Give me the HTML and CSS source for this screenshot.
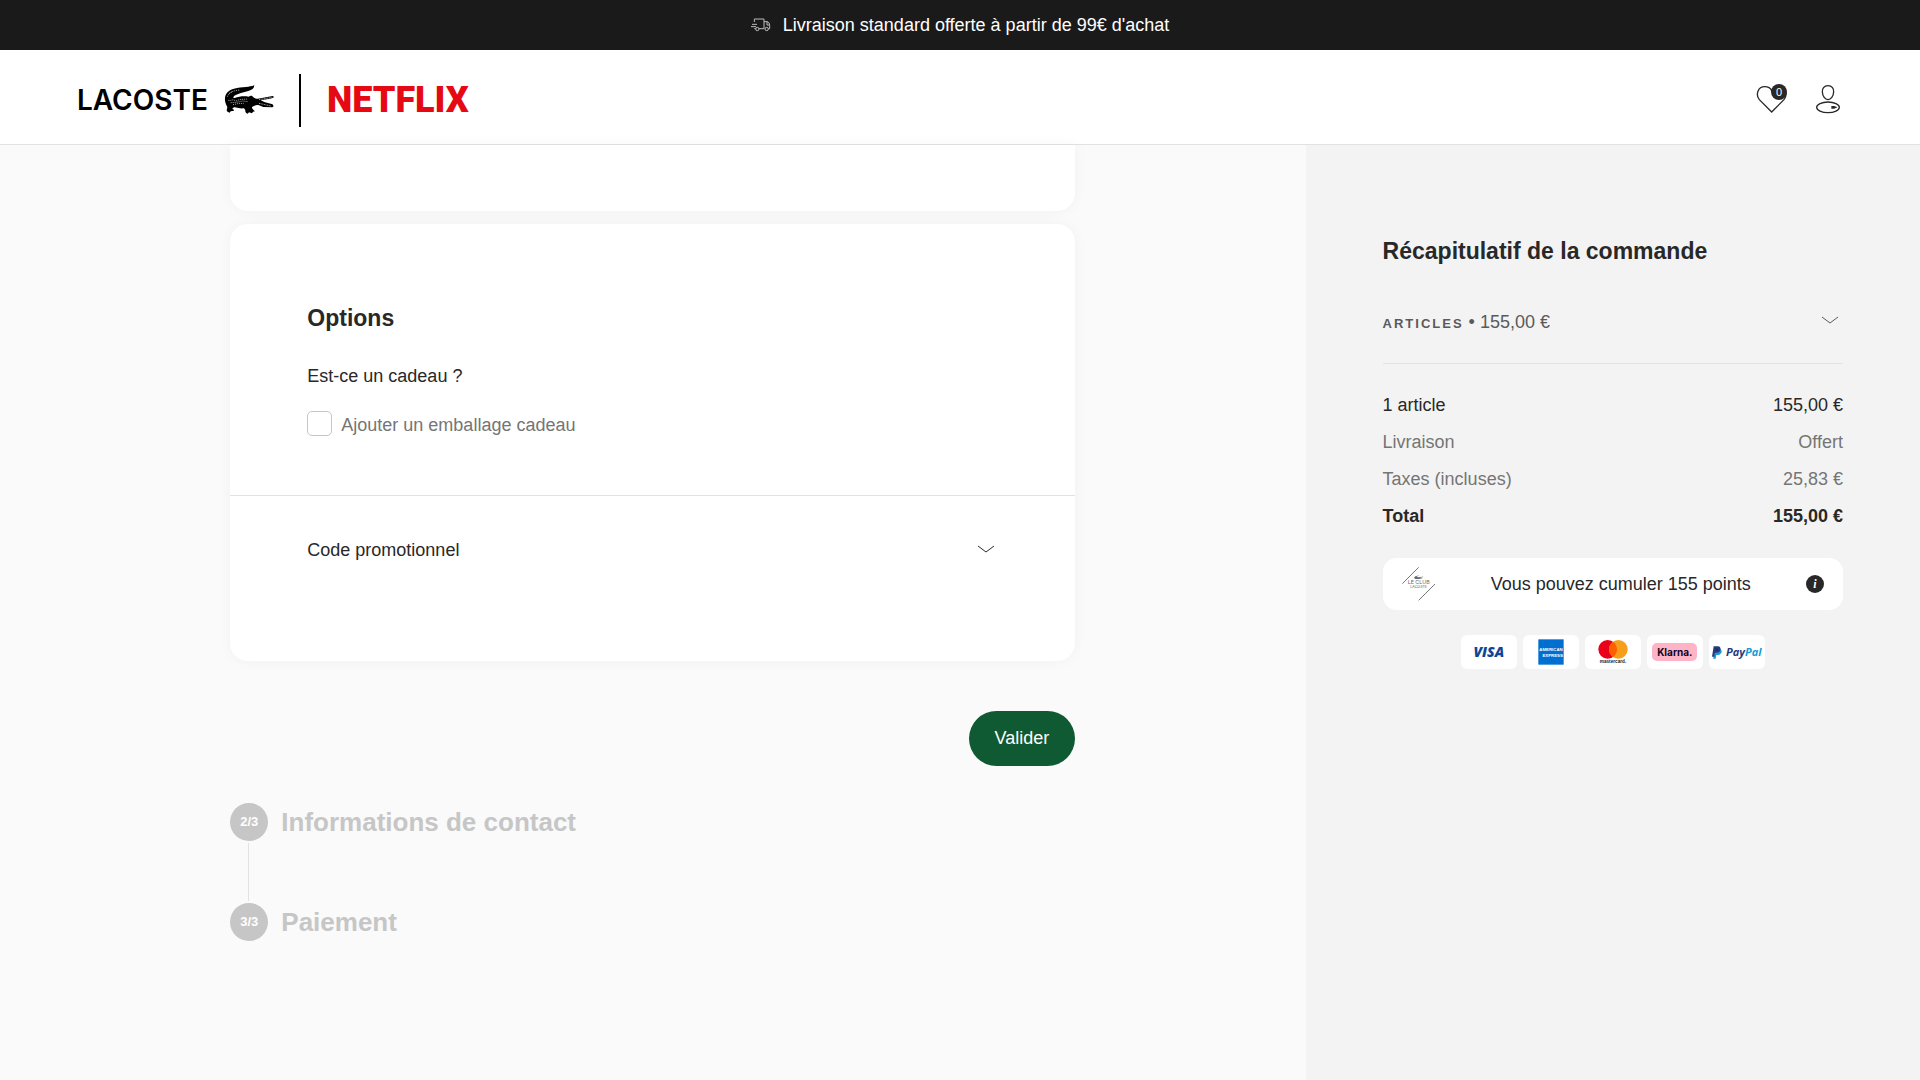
FILE: index.html
```html
<!DOCTYPE html>
<html lang="fr">
<head>
<meta charset="utf-8">
<meta name="viewport" content="width=device-width, initial-scale=1">
<title>Lacoste - Panier</title>
<link rel="stylesheet" href="styles.css">
</head>
<body>
<div class="promo">
  <svg class="promo-icon" width="20" height="14" viewBox="0 0 60 42" fill="none" stroke="#bdbdbd" stroke-width="3" aria-hidden="true">
    <path d="M10 12V3h29v29H24M39 11h9c5 0 8 6 8 12v9h-4M14 32h-4M3 19h15M0 26h15M48 11v10h8"/>
    <circle cx="19" cy="33" r="5"/><circle cx="47" cy="33" r="5"/>
  </svg>
  <p>Livraison standard offerte à partir de 99€ d'achat</p>
</div>

<header class="header">
  <a class="brand" href="#">
    <span class="brand-lacoste">LACOSTE</span>
    <svg class="brand-croc" width="50" height="30" viewBox="0 0 150 90" aria-hidden="true">
      <path fill="#000" d="M91 1c-1 10-7 14-18 17c-14 5-31 7-42 14c-4 4-4 8 1 7c14-5 28-7 42-4c5-4 11-4 13 1c5 4 9 5 14 5l45-8c3 0 4 3 2 5l-10 3l-28 5l13 6l20 5c6 2 7 8 2 10l-27-1l-15-6c-8 0-13 3-19 6c-1 6 6 8 9 13l-6 1l-3 5l-9-3l-4 4c-6-2-8-7-7-11l-4-5c-9 1-18 0-27-3c-4 0-7 2-8 5c3 1 5 2 5 5l-10 2l-3 4c-5-1-8-3-9-7l2-10C5 56 2 49 3 39c1-15 12-24 27-28c13-4 23-3 36-5c10-1 16-2 25-5z"/>
      <path fill="none" stroke="#fff" stroke-width="2" stroke-dasharray="3 3" d="M13 46c8 2 12-4 18 0s9 0 14-2l24-2M20 53l18-1l18-4l16 2M10 35c4-9 9-12 16-15M27 59l14-3l18-1M15 26c9-8 18-9 31-11"/>
      <path fill="none" stroke="#fff" stroke-width="2" stroke-dasharray="3 2" d="M105 44l40-7M105 55l36 8"/>
    </svg>
    <span class="brand-line"></span>
    <span class="brand-netflix">NETFLIX</span>
  </a>
  <nav class="tools" aria-label="Compte">
    <a class="tool" href="#" aria-label="Favoris">
      <svg width="32" height="32" viewBox="0 0 96 96" fill="none" stroke="#282828" stroke-width="4" aria-hidden="true">
        <path d="M47 90 10 53C-2 38 6 14 26 14c10 0 18 5 21 12c4-8 12-12 21-12c20 0 28 24 16 39z"/>
      </svg>
      <span class="badge">0</span>
    </a>
    <a class="tool" href="#" aria-label="Mon compte">
      <svg width="24" height="32" viewBox="0 0 72 96" fill="none" stroke="#282828" stroke-width="4" aria-hidden="true">
        <path d="M36 11c12 0 18 9 17 19c-1 13-8 23-17 23s-16-10-17-23c-1-10 5-19 17-19z"/>
        <ellipse cx="36" cy="76" rx="34" ry="16"/>
        <path d="M48 74h6l5 2l-5 2h-6z" fill="#282828"/>
      </svg>
    </a>
  </nav>
</header>

<div class="layout">
  <main class="checkout">
    <div class="column">
      <section class="card card-previous"></section>
      <section class="card">
        <div class="options">
          <h2 class="heading">Options</h2>
          <p class="question">Est-ce un cadeau ?</p>
          <label class="check">
            <input type="checkbox">
            <span>Ajouter un emballage cadeau</span>
          </label>
        </div>
        <button class="promo-code" type="button">
          <span>Code promotionnel</span>
          <svg width="18" height="10" viewBox="0 0 18 10" fill="none" stroke="#282828" aria-hidden="true"><path d="M1 1l8 6l8-6"/></svg>
        </button>
      </section>
      <button class="submit" type="button">Valider</button>
      <ol class="steps">
        <li class="step"><span class="step-number">2/3</span><h2 class="step-title">Informations de contact</h2></li>
        <li class="step"><span class="step-number">3/3</span><h2 class="step-title">Paiement</h2></li>
      </ol>
    </div>
  </main>

  <aside class="summary">
    <h2 class="heading">Récapitulatif de la commande</h2>
    <button class="articles" type="button">
      <span><span class="articles-label">Articles</span> • 155,00 €</span>
      <svg width="18" height="10" viewBox="0 0 18 10" fill="none" stroke="#5a5a5a" aria-hidden="true"><path d="M1 2l8 6l8-6"/></svg>
    </button>
    <table class="totals">
      <tbody>
        <tr class="strong-ink"><th scope="row">1 article</th><td>155,00 €</td></tr>
        <tr><th scope="row">Livraison</th><td>Offert</td></tr>
        <tr><th scope="row">Taxes (incluses)</th><td>25,83 €</td></tr>
        <tr class="total"><th scope="row">Total</th><td>155,00 €</td></tr>
      </tbody>
    </table>
    <div class="points">
      <svg width="34" height="34" viewBox="0 0 102 102" fill="none" stroke="#777" stroke-width="3" aria-hidden="true">
        <path d="M1 50 50 1M50 100l49-49"/>
        <path d="M52 25c-8 3-16 3-15 8c0 4 7 3 13 3l12-2l-8-2l11-2c-5-1-12 0-16 1l-6-1z" fill="#666" stroke="none"/>
        <text class="club-name" x="50" y="52" text-anchor="middle">LE CLUB</text>
        <text class="club-sub" x="50" y="64" text-anchor="middle">LACOSTE</text>
      </svg>
      <p>Vous pouvez cumuler 155 points</p>
      <button class="info" type="button" aria-label="Informations">i</button>
    </div>
    <ul class="payments">
      <li class="pay"><span class="visa">VISA</span></li>
      <li class="pay">
        <svg width="26" height="26" viewBox="0 0 78 78" aria-hidden="true">
          <rect width="76" height="76" x="1" y="1" fill="#016fd0"/>
          <g class="amex"><text x="39" y="37" text-anchor="middle">AMERICAN</text><text x="44" y="55" text-anchor="middle">EXPRESS</text></g>
        </svg>
      </li>
      <li class="pay">
        <svg width="32" height="26" viewBox="0 0 96 78" aria-hidden="true">
          <circle cx="32" cy="31" r="28" fill="#eb001b"/><circle cx="64" cy="31" r="28" fill="#f79e1b"/>
          <path d="M48 8a28 28 0 0 1 0 46a28 28 0 0 1 0-46z" fill="#ff5f00"/>
          <text class="mastercard" x="48" y="73" text-anchor="middle">mastercard.</text>
        </svg>
      </li>
      <li class="pay"><span class="klarna">Klarna.</span></li>
      <li class="pay pay-paypal">
        <svg width="10" height="13" viewBox="0 0 30 39" aria-hidden="true">
          <path d="M12 10h14c6 5 3 17-9 17h-4l-2 11H3z" fill="#179bd7"/>
          <path d="M5 1h13c11 0 11 18-3 19h-6l-2 12H0z" fill="#253b80"/>
          <path d="M11 7h6c4 1 3 7-2 7h-5z" fill="#222d65"/>
        </svg>
        <span class="paypal">Pay<span class="pal">Pal</span></span>
      </li>
    </ul>
  </aside>
</div>
</body>
</html>
```

FILE: styles.css
```css
*,
*::before,
*::after {
  box-sizing: border-box;
}

html {
  height: 100%;
}

body {
  margin: 0;
  min-height: 100%;
  display: flex;
  flex-direction: column;
  background: #fafafa;
  color: #282828;
  font: 18px/24px "Liberation Sans", Arial, sans-serif;
}

h2,
p,
ol,
ul {
  margin: 0;
  padding: 0;
  list-style: none;
}

button {
  border: 0;
  padding: 0;
  background: none;
  color: inherit;
  font: inherit;
  text-align: left;
  cursor: pointer;
}

a {
  color: inherit;
  text-decoration: none;
}

svg {
  display: block;
  flex: none;
}

.promo {
  display: flex;
  align-items: center;
  justify-content: center;
  gap: 12px;
  min-height: 50px;
  background: #1a1a1a;
  color: #fff;
}

.header {
  display: flex;
  align-items: center;
  justify-content: space-between;
  min-height: 95px;
  padding: 2px 77px 0;
  background: #fff;
  border-bottom: 1px solid #e2e2e2;
}

.brand {
  display: flex;
  align-items: center;
  padding-top: 4px;
  color: #000;
}

.brand-lacoste {
  margin-right: 16px;
  font: 600 28px/32px Inter, sans-serif;
}

.brand-line {
  width: 2px;
  height: 53px;
  margin: 0 26px 0 25px;
  background: #000;
}

.brand-netflix {
  color: #e50914;
  font: 900 36px/48px Roboto, sans-serif;
}

.tools {
  display: flex;
  gap: 28px;
  padding-right: 3px;
}

.tool {
  position: relative;
}

.badge {
  position: absolute;
  top: 2px;
  right: 1px;
  width: 16px;
  height: 16px;
  border-radius: 50%;
  background: #282828;
  color: #fff;
  font-size: 11px;
  line-height: 16px;
  text-align: center;
}

.layout {
  flex: 1;
  display: grid;
  grid-template-columns: 17fr 8fr;
}

.column {
  max-width: 845px;
  margin: 0 auto;
  display: flex;
  flex-direction: column;
}

.card {
  border-radius: 18px;
  background: #fff;
  box-shadow: 0 0 14px rgba(0, 0, 0, 0.04);
}

.card-previous {
  min-height: 66px;
  margin-bottom: 13px;
  border-radius: 0 0 18px 18px;
}

.heading {
  font-size: 23px;
  line-height: 32px;
}

.options {
  padding: 78px 77px 56px;
  border-bottom: 1px solid #e2e2e2;
}

.question {
  margin: 30px 0 22px;
}

.check {
  display: flex;
  align-items: center;
  gap: 9px;
  min-height: 29px;
  color: #757575;
}

.check input {
  appearance: none;
  width: 25px;
  height: 25px;
  margin: 0 0 2px;
  border: 1px solid #c6c6c6;
  border-radius: 5px;
  background: #fff;
}

.promo-code {
  display: flex;
  align-items: center;
  justify-content: space-between;
  width: 100%;
  padding: 42px 80px 99px 77px;
}

.submit {
  align-self: flex-end;
  margin: 50px 0 37px;
  padding: 15px 26px 16px;
  border-radius: 28px;
  background: #0f5a32;
  color: #fff;
}

.steps {
  display: flex;
  flex-direction: column;
  gap: 62px;
}

.step {
  position: relative;
  display: flex;
  align-items: center;
  gap: 13px;
  color: #c6c6c6;
}

.step + .step::before {
  content: "";
  position: absolute;
  left: 18px;
  bottom: 40px;
  width: 1px;
  height: 58px;
  background: #e2e2e2;
}

.step-number {
  width: 38px;
  height: 38px;
  border-radius: 50%;
  background: #c6c6c6;
  color: #fff;
  font-size: 13px;
  font-weight: bold;
  line-height: 38px;
  text-align: center;
}

.step-title {
  font-size: 26px;
  line-height: 32px;
}

.summary {
  padding: 90px 77px;
  background: #f3f3f3;
}

.articles {
  display: flex;
  align-items: center;
  justify-content: space-between;
  width: 100%;
  margin: 43px 0 23px;
  padding: 0 4px 27px 0;
  border-bottom: 1px solid #e2e2e2;
  color: #5a5a5a;
}

.articles svg {
  margin-bottom: 6px;
}

.articles-label {
  font-size: 13px;
  font-weight: bold;
  letter-spacing: 2px;
  text-transform: uppercase;
}

.totals {
  width: 100%;
  margin-bottom: 23px;
  border-collapse: collapse;
  color: #757575;
  line-height: 37px;
}

.totals th,
.totals td {
  padding: 0;
  font-weight: inherit;
  text-align: left;
}

.totals td {
  text-align: right;
}

.totals .strong-ink,
.totals .total {
  color: #282828;
}

.totals .total {
  font-weight: bold;
}

.points {
  display: flex;
  align-items: center;
  justify-content: space-between;
  min-height: 52px;
  padding: 0 19px;
  border-radius: 14px;
  background: #fff;
}

.club-name,
.club-sub {
  fill: #666;
  stroke: none;
  font: 16px Inter, sans-serif;
}

.club-sub {
  font-size: 11px;
}

.info {
  width: 18px;
  height: 18px;
  border-radius: 50%;
  background: #282828;
  color: #fff;
  font: italic bold 12px/18px "Liberation Serif", serif;
  text-align: center;
}

.payments {
  display: flex;
  justify-content: center;
  gap: 6px;
  margin-top: 25px;
}

.pay {
  display: flex;
  align-items: center;
  justify-content: center;
  width: 56px;
  height: 34px;
  border-radius: 6px;
  background: #fff;
}

.pay-paypal {
  gap: 4px;
}

.visa {
  color: #0e4595;
  font: italic 800 14px/16px "Open Sans", sans-serif;
}

.amex {
  fill: #fff;
  font: bold 13px "Liberation Sans", sans-serif;
}

.mastercard {
  fill: #222;
  font: bold 14px "Liberation Sans", sans-serif;
}

.klarna {
  padding: 0 5px;
  border-radius: 5px;
  background: #ffb3c7;
  color: #0b051d;
  font: bold 10px/18px Inter, sans-serif;
}

.paypal {
  color: #253b80;
  font: italic bold 11px/16px "Open Sans", sans-serif;
}

.pal {
  color: #179bd7;
}
```
